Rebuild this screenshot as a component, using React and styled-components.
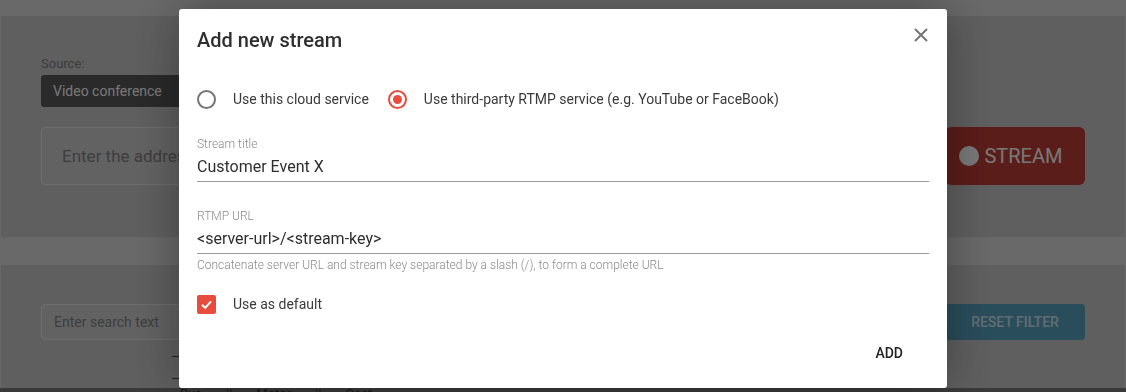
import styled, { createGlobalStyle } from "styled-components";

const GlobalStyle = createGlobalStyle`
  html, body {
    margin: 0;
    padding: 0;
    background: #dfdfdf;
    font-family: Roboto, "Liberation Sans", Arial, sans-serif;
  }
  * { box-sizing: border-box; }
`

const Page = styled.div`
  height: 392px;
  overflow: hidden;
  padding-top: 16px;
  background: #dfdfdf;
`

const Panel = styled.section`
  margin: 0 1px;
  background: #cacaca;
  padding: ${p => p.$pad};
  height: ${p => p.$height || "auto"};
  margin-top: ${p => p.$top || "0"};
`

const Footer = styled.div`
  height: 8px;
  background: #7b7b7b;
`

const SourceLabel = styled.div`
  font-size: 13px;
  line-height: 16px;
  color: #808080;
`

const Select = styled.div`
  margin-top: 3px;
  width: 200px;
  height: 32px;
  background: #595959;
  color: #fdfdfd;
  border-radius: 3px;
  font-size: 14px;
  line-height: 32px;
  padding-left: 12px;
`

const Row = styled.div`
  display: flex;
  gap: 12px;
  margin-top: ${p => p.$top || "0"};
  height: ${p => p.$height};
`

const TextInput = styled.div`
  flex: 1;
  background: #d1d1d1;
  border: 1px solid #eaeaea;
  border-radius: 4px;
  display: flex;
  align-items: center;
  padding-left: ${p => p.$pl};
  font-size: ${p => p.$size};
  color: #848484;
`

const ActionButton = styled.div`
  width: 140px;
  flex: none;
  border-radius: ${p => p.$radius};
  background: ${p => p.$bg};
  color: ${p => p.$color};
  display: flex;
  align-items: center;
  justify-content: center;
  gap: 5px;
  font-size: ${p => p.$size};
  font-weight: ${p => p.$weight || 400};
  padding-right: ${p => p.$pr || "0"};
`

const Dot = styled.span`
  width: 20px;
  height: 20px;
  border-radius: 50%;
  background: #ffffff;
`

const Table = styled.div`
  margin: 16px 0 0 131px;
  width: 760px;
`

const TableHead = styled.div`
  height: 23px;
  border-top: 1px solid #444;
  border-bottom: 1px solid #444;
`

const TableRow = styled.div`
  display: flex;
  gap: 24px;
  padding: 7px 0 0 8px;
  font-size: 13px;
  color: #333;
`

const Overlay = styled.div`
  position: fixed;
  inset: 0;
  background: rgba(0, 0, 0, 0.53);
  display: flex;
  justify-content: center;
  align-items: flex-start;
  padding-top: 9px;
`

const Dialog = styled.div`
  width: 768px;
  height: 379px;
  background: #fff;
  border-radius: 3px;
  box-shadow: 0 0 50px rgba(0, 0, 0, 0.35);
  padding: 0 18px;
  display: flex;
  flex-direction: column;
`

const Header = styled.div`
  display: flex;
  justify-content: space-between;
  align-items: flex-start;
  padding-top: 19px;
`

const Title = styled.h2`
  margin: 0;
  font-size: 20px;
  line-height: 24px;
  font-weight: 500;
  color: #2e2e2e;
`

const CloseBtn = styled.div`
  width: 14px;
  height: 14px;
  margin-right: 1px;
  display: flex;
`

const RadioRow = styled.div`
  display: flex;
  align-items: center;
  margin-top: 37px;
  height: 20px;
`

const Choice = styled.label`
  display: flex;
  align-items: center;
  gap: 17px;
  font-size: 14px;
  color: #3a3a3a;
  margin-right: 19px;
`

const Radio = styled.span`
  width: 19px;
  height: 19px;
  border-radius: 50%;
  border: 2px solid ${p => (p.$on ? "#e84c3d" : "#757575")};
  display: flex;
  align-items: center;
  justify-content: center;
  &::after {
    content: "";
    width: 9px;
    height: 9px;
    border-radius: 50%;
    background: ${p => (p.$on ? "#e84c3d" : "transparent")};
  }
`

const Field = styled.div`
  margin-top: ${p => p.$top};
`

const FieldLabel = styled.div`
  font-size: 12px;
  line-height: 14px;
  font-weight: 300;
  color: #8a8a8a;
`

const FieldValue = styled.div`
  margin-top: 6px;
  font-size: 16px;
  line-height: 20px;
  color: #2e2e2e;
  padding-bottom: 4px;
  border-bottom: 1px solid #9a9a9a;
`

const Helper = styled.div`
  margin-top: 4px;
  font-size: 12px;
  line-height: 14px;
  font-weight: 300;
  color: #8a8a8a;
`

const CheckRow = styled.label`
  display: flex;
  align-items: center;
  gap: 17px;
  margin-top: 22px;
  height: 20px;
  font-size: 14px;
  color: #3a3a3a;
`

const Checkbox = styled.span`
  width: 19px;
  height: 19px;
  border-radius: 2px;
  background: #e74c3c;
  display: flex;
  align-items: center;
  justify-content: center;
`

const Actions = styled.div`
  display: flex;
  justify-content: flex-end;
  margin-top: 21px;
`

const TextButton = styled.div`
  height: 36px;
  line-height: 36px;
  padding: 0 16px;
  margin-right: 10px;
  font-size: 14px;
  font-weight: 500;
  color: #222;
`

export default function App() {
  return (
    <>
      <GlobalStyle />
      <Page>
        <Panel $pad="40px 40px 0" $height="221px">
          <SourceLabel>Source:</SourceLabel>
          <Select>Video conference</Select>
          <Row $top="20px" $height="58px">
            <TextInput $pl="20px" $size="17px">Enter the address of the video conference</TextInput>
            <ActionButton $radius="6px" $bg="#c23e35" $color="#ffffff" $size="20px" $pr="8px">
              <Dot />STREAM
            </ActionButton>
          </Row>
        </Panel>
        <Panel $pad="39px 40px 0" $top="28px" $height="123px">
          <Row $height="36px">
            <TextInput $pl="12px" $size="14px">Enter search text</TextInput>
            <ActionButton $radius="4px" $bg="#59a4c2" $color="#d0e8f2" $size="14px" $weight={500}>
              RESET FILTER
            </ActionButton>
          </Row>
          <Table>
            <TableHead />
            <TableRow>
              <span>Bus</span><span>||</span><span>Motor</span><span>||</span><span>Cost</span>
            </TableRow>
          </Table>
        </Panel>
        <Footer />
      </Page>

      <Overlay>
        <Dialog>
          <Header>
            <Title>Add new stream</Title>
            <CloseBtn>
              <svg width="14" height="14" viewBox="0 0 14 14">
                <path d="M1 1 L13 13 M13 1 L1 13" stroke="#757575" strokeWidth="2" fill="none" />
              </svg>
            </CloseBtn>
          </Header>

          <RadioRow>
            <Choice><Radio />Use this cloud service</Choice>
            <Choice><Radio $on />Use third-party RTMP service (e.g. YouTube or FaceBook)</Choice>
          </RadioRow>

          <Field $top="28px">
            <FieldLabel>Stream title</FieldLabel>
            <FieldValue>Customer Event X</FieldValue>
          </Field>

          <Field $top="27px">
            <FieldLabel>RTMP URL</FieldLabel>
            <FieldValue>{"<server-url>/<stream-key>"}</FieldValue>
            <Helper>Concatenate server URL and stream key separated by a slash (/), to form a complete URL</Helper>
          </Field>

          <CheckRow>
            <Checkbox>
              <svg width="13" height="13" viewBox="0 0 13 13">
                <path d="M2 6.8 L5.2 9.8 L11 3.4" stroke="#fff" strokeWidth="2" fill="none" />
              </svg>
            </Checkbox>
            Use as default
          </CheckRow>

          <Actions>
            <TextButton>ADD</TextButton>
          </Actions>
        </Dialog>
      </Overlay>
    </>
  );
}
